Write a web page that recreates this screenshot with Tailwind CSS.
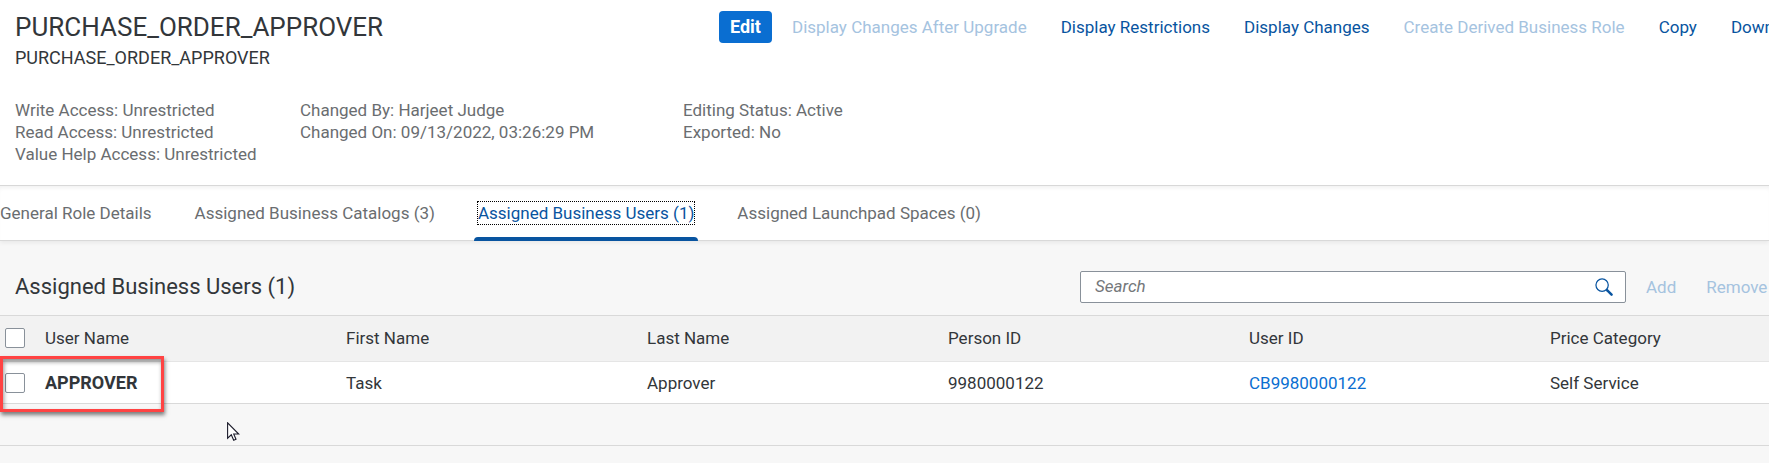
<!DOCTYPE html>
<html lang="en">
<head>
<meta charset="utf-8">
<title>PURCHASE_ORDER_APPROVER</title>
<script src="https://cdn.jsdelivr.net/npm/@tailwindcss/browser@4"></script>
</head>
<body class="min-h-screen overflow-hidden bg-[#f7f7f7] font-['Roboto','Liberation_Sans',sans-serif] text-[17px] leading-[22px] text-[#32363a]">
<header class="border-b border-[#d9d9d9] bg-white pb-5 pl-[15px]">
  <div class="flex whitespace-nowrap pt-[11px]">
    <div class="w-[704px] shrink-0">
      <h1 class="text-[26px] leading-8">PURCHASE_ORDER_APPROVER</h1>
      <p class="mt-1 text-lg leading-[22px]">PURCHASE_ORDER_APPROVER</p>
    </div>
    <div class="flex h-8 shrink-0 items-center gap-[34px] text-[#0854a0]">
      <button class="-mr-[14px] h-8 w-[53px] rounded bg-[#0a6ed1] text-lg leading-[22px] font-bold text-white">Edit</button>
      <button class="text-[#a5c3df]" disabled>Display Changes After Upgrade</button>
      <button>Display Restrictions</button>
      <button>Display Changes</button>
      <button class="text-[#a5c3df]" disabled>Create Derived Business Role</button>
      <button>Copy</button>
      <button>Download</button>
    </div>
  </div>
  <div class="mt-[30px] flex text-[#6a6d70]">
    <div class="w-[285px]"><p>Write Access: Unrestricted</p><p>Read Access: Unrestricted</p><p>Value Help Access: Unrestricted</p></div>
    <div class="w-[383px]"><p>Changed By: Harjeet Judge</p><p>Changed On: 09/13/2022, 03:26:29 PM</p></div>
    <div><p>Editing Status: Active</p><p>Exported: No</p></div>
  </div>
</header>
<nav class="relative flex h-[55px] gap-[43px] whitespace-nowrap border-b border-[#d9d9d9] bg-white text-[#6a6d70] shadow-[inset_0_4px_4px_-2px_#0000000f,0_2px_4px_#0000000f]">
  <a href="#details" class="pt-4">General Role Details</a>
  <a href="#catalogs" class="pt-4">Assigned Business Catalogs (3)</a>
  <a href="#users" class="relative pt-4 text-[#0854a0]"><span class="block outline-1 outline-dotted outline-black">Assigned Business Users (1)</span><span class="absolute -inset-x-1 -bottom-px h-1 rounded-t-sm bg-[#0854a0]"></span></a>
  <a href="#spaces" class="pt-4">Assigned Launchpad Spaces (0)</a>
</nav>
<main id="users">
  <div class="flex h-[74px] items-center whitespace-nowrap pl-[15px] pt-[20px] pb-[3px]">
    <h2 class="grow text-[22px] leading-7">Assigned Business Users (1)</h2>
    <div class="flex h-8 w-[546px] shrink-0 items-center rounded-xs border border-[#89919a] bg-white pl-[14px] pr-3">
      <input type="search" aria-label="Search" placeholder="Search" class="h-full min-w-0 grow pb-0.5 outline-none placeholder:italic placeholder:text-[#74777a]">
      <button aria-label="Run search"><svg class="size-[18px]" viewBox="0 0 19 19" fill="none" stroke="#0854a0"><circle cx="7.5" cy="7.5" r="6.5" stroke-width="1.3"/><path d="M12 12l1.5 1.5" stroke-width="1.5"/><path d="M13 13l4.5 4.5" stroke-width="2.6" stroke-linecap="round"/></svg></button>
    </div>
    <div class="flex w-[143px] shrink-0 gap-[30px] pl-5 text-[#a5c3df]">
      <button disabled>Add</button>
      <button disabled>Remove</button>
    </div>
  </div>
  <div class="relative">
    <table class="w-[calc(100%+74px)] table-fixed border-collapse whitespace-nowrap text-left">
      <thead>
        <tr class="h-[46px] border-t border-b border-t-[#d9d9d9] border-b-[#e5e5e5] bg-[#f2f2f2] *:pb-0.5 *:pl-2 *:font-normal">
          <th class="w-[37px] !pl-[5px]"><input type="checkbox" aria-label="Select all" class="block size-5 appearance-none rounded-xs border border-[#89919a] bg-white"></th>
          <th>User Name</th><th>First Name</th><th>Last Name</th><th>Person ID</th><th>User ID</th><th>Price Category</th>
        </tr>
      </thead>
      <tbody>
        <tr class="h-[42px] border-b border-[#d9d9d9] bg-white *:pl-2">
          <td class="!pl-[5px]"><input type="checkbox" aria-label="Select APPROVER" class="block size-5 appearance-none rounded-xs border border-[#89919a] bg-white"></td>
          <td class="text-lg leading-[22px] font-bold">APPROVER</td><td>Task</td><td>Approver</td><td>9980000122</td><td><a href="#user" class="text-[#0a6ed1]">CB9980000122</a></td><td>Self Service</td>
        </tr>
      </tbody>
    </table>
    <div class="pointer-events-none absolute left-0 top-[41px] h-14 w-[164px] border-3 border-[#ff4343] shadow-[1px_3px_4px_#00000080,inset_1px_3px_4px_#00000066]"></div>
    <svg class="absolute left-[227px] top-[107px] h-5 w-[13px]" viewBox="0 0 13 20" fill="#fff" stroke="#1c1c2b" stroke-width="1.1"><path d="M.6 .8V16.2L4.3 12.8L6.7 18.3L9 17.3L6.7 12H11.7Z"/></svg>
  </div>
  <div class="h-[42px] border-b border-[#d9d9d9]"></div>
</main>
</body>
</html>
